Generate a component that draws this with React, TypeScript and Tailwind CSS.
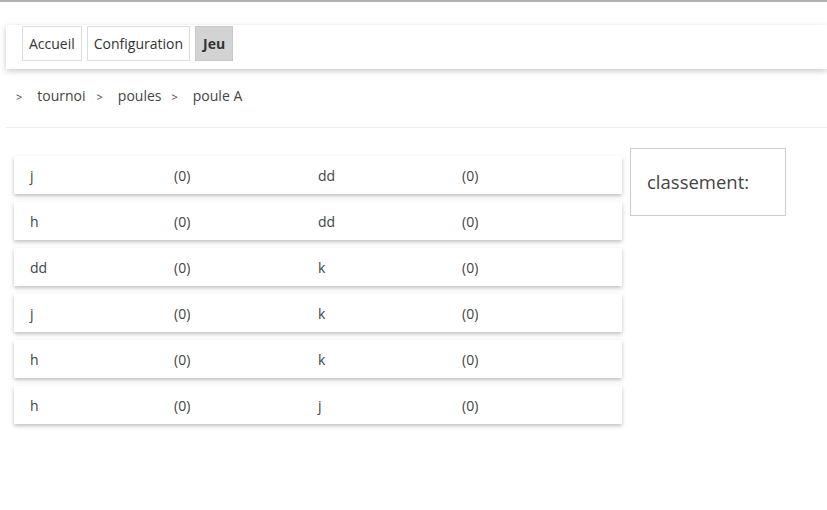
import React from "react";

const matches = [
 ["j", "(0)", "dd", "(0)"],
 ["h", "(0)", "dd", "(0)"],
 ["dd", "(0)", "k", "(0)"],
 ["j", "(0)", "k", "(0)"],
 ["h", "(0)", "k", "(0)"],
 ["h", "(0)", "j", "(0)"],
];

export default function App() {
 return (
  <div
   className="min-h-[510px] w-[827px] bg-white text-[#333] border-t-2 border-[#b0b0b0]"
   style={{ fontFamily: '"Open Sans", "Noto Sans", sans-serif' }}>
   <div className="pt-[23px] pl-[6px]">
    <nav className="flex items-start gap-[5px] h-[44px] pl-4 pt-px bg-white shadow-[0_2px_6px_rgba(0,0,0,0.22)]">
     <button className="h-[35px] px-[6px] border border-[#ddd] bg-white text-[14px] text-[#333]">
      Accueil
     </button>
     <button className="h-[35px] px-[6px] border border-[#ddd] bg-white text-[14px] text-[#333]">
      Configuration
     </button>
     <button className="h-[35px] w-[38px] px-[6px] border border-[#c8c8c8] bg-[#d3d3d3] text-[14px] font-bold text-[#333]">
      Jeu
     </button>
    </nav>
   </div>
   <div className="flex items-baseline h-[58px] pt-[17px] pl-[16px] text-[14px] leading-[19px] text-[#444]">
    <span className="text-[11px] mr-[15px]">&gt;</span>
    <span className="mr-[11px]">tournoi</span>
    <span className="text-[11px] mr-[15px]">&gt;</span>
    <span className="mr-[10px]">poules</span>
    <span className="text-[11px] mr-[15px]">&gt;</span>
    <span>poule A</span>
   </div>
   <div className="ml-[6px] border-t border-[#eee]" />
   <div className="flex items-start pt-[20px] pl-[14px] gap-[8px]">
    <div className="flex flex-col gap-[8px] pt-[8px] w-[608px]">
     {matches.map((m, i) => (
      <div
       key={i}
       className="flex items-center h-[38px] pl-4 bg-white shadow-[0_2px_4px_rgba(0,0,0,0.25)] text-[14px] text-[#444]">
       {m.map((c, j) => (
        <span key={j} className="w-[144px]">
         {c}
        </span>
       ))}
      </div>
     ))}
    </div>
    <div className="w-[156px] h-[68px] border border-[#ccc] flex items-center pl-4 text-[18.5px] text-[#444]">
     classement:
    </div>
   </div>
  </div>
 );
}
